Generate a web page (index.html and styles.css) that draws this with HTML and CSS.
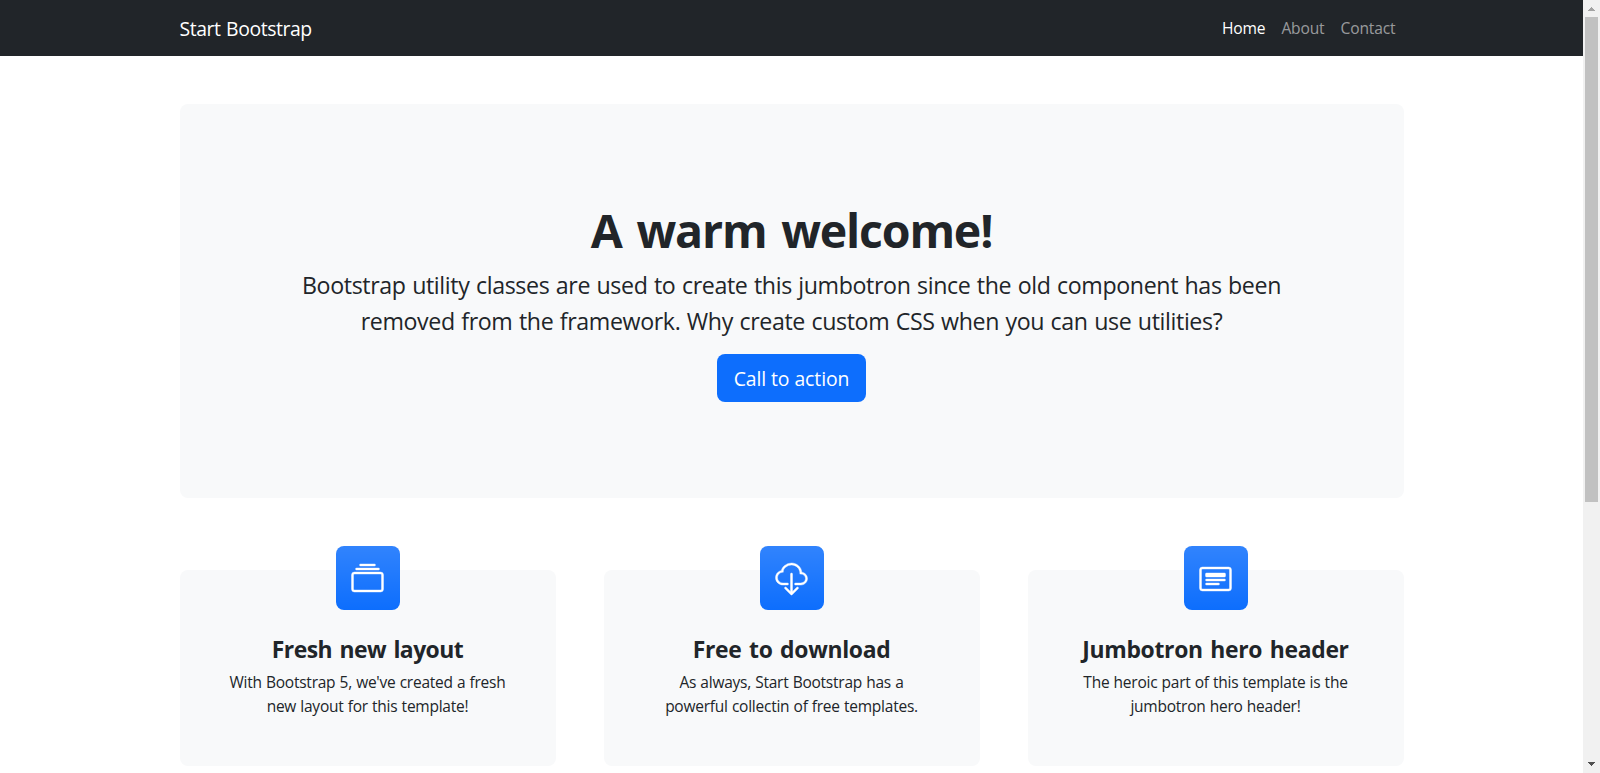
FILE: index.html
```html
<!DOCTYPE html>
<html lang="en">
<head>
<meta charset="utf-8">
<title>Start Bootstrap</title>
<link rel="stylesheet" href="styles.css">
</head>
<body>
<div class="window">
  <div class="page">
    <nav class="navbar">
      <div class="container navbar-inner">
        <a class="brand">Start Bootstrap</a>
        <ul class="nav">
          <li class="nav-link active">Home</li>
          <li class="nav-link">About</li>
          <li class="nav-link">Contact</li>
        </ul>
      </div>
    </nav>
    <header class="container hero">
      <h1 class="hero-title">A warm welcome!</h1>
      <p class="hero-lead">Bootstrap utility classes are used to create this jumbotron since the old component has been<br>removed from the framework. Why create custom CSS when you can use utilities?</p>
      <a class="btn">Call to action</a>
    </header>
    <section class="container cards">
      <article class="card">
        <div class="feature">
          <svg class="icon" viewBox="0 0 16 16"><path d="M2.5 3.5a.5.5 0 0 1 0-1h11a.5.5 0 0 1 0 1h-11zm2-2a.5.5 0 0 1 0-1h7a.5.5 0 0 1 0 1h-7zM0 13a1.5 1.5 0 0 0 1.5 1.5h13A1.5 1.5 0 0 0 16 13V6a1.5 1.5 0 0 0-1.5-1.5h-13A1.5 1.5 0 0 0 0 6v7zm1.5.5A.5.5 0 0 1 1 13V6a.5.5 0 0 1 .5-.5h13a.5.5 0 0 1 .5.5v7a.5.5 0 0 1-.5.5h-13z"/></svg>
        </div>
        <h2 class="card-title tight">Fresh new layout</h2>
        <p class="card-text">With Bootstrap 5, we've created a fresh<br>new layout for this template!</p>
      </article>
      <article class="card">
        <div class="feature">
          <svg class="icon" viewBox="0 0 16 16"><path d="M4.406 1.342A5.53 5.53 0 0 1 8 0c2.69 0 4.923 2 5.166 4.579C14.758 4.804 16 6.137 16 7.773 16 9.569 14.502 11 12.687 11H10a.5.5 0 0 1 0-1h2.688C13.979 10 15 8.988 15 7.773c0-1.216-1.02-2.228-2.313-2.228h-.5v-.5C12.188 2.825 10.328 1 8 1a4.53 4.53 0 0 0-2.941 1.1c-.757.652-1.153 1.438-1.153 2.055v.448l-.445.049C2.064 4.805 1 5.952 1 7.318 1 8.785 2.23 10 3.781 10H6a.5.5 0 0 1 0 1H3.781C1.708 11 0 9.366 0 7.318c0-1.763 1.266-3.223 2.942-3.593.143-.863.698-1.723 1.464-2.383z"/><path d="M7.646 15.854a.5.5 0 0 0 .708 0l3-3a.5.5 0 0 0-.708-.708L8.5 14.293V5.5a.5.5 0 0 0-1 0v8.793l-2.146-2.147a.5.5 0 0 0-.708.708l3 3z"/></svg>
        </div>
        <h2 class="card-title">Free to download</h2>
        <p class="card-text">As always, Start Bootstrap has a<br>powerful collectin of free templates.</p>
      </article>
      <article class="card">
        <div class="feature">
          <svg class="icon" viewBox="0 0 16 16"><path d="M14.5 3a.5.5 0 0 1 .5.5v9a.5.5 0 0 1-.5.5h-13a.5.5 0 0 1-.5-.5v-9a.5.5 0 0 1 .5-.5h13zm-13-1A1.5 1.5 0 0 0 0 3.5v9A1.5 1.5 0 0 0 1.5 14h13a1.5 1.5 0 0 0 1.5-1.5v-9A1.5 1.5 0 0 0 14.5 2h-13z"/><path d="M3 8.5a.5.5 0 0 1 .5-.5h9a.5.5 0 0 1 0 1h-9a.5.5 0 0 1-.5-.5zm0 2a.5.5 0 0 1 .5-.5h6a.5.5 0 0 1 0 1h-6a.5.5 0 0 1-.5-.5zm0-5a.5.5 0 0 1 .5-.5h9a.5.5 0 0 1 .5.5v1a.5.5 0 0 1-.5.5h-9a.5.5 0 0 1-.5-.5v-1z"/></svg>
        </div>
        <h2 class="card-title">Jumbotron hero header</h2>
        <p class="card-text">The heroic part of this template is the<br>jumbotron hero header!</p>
      </article>
    </section>
  </div>
  <div class="scrollbar">
    <svg class="arrow" viewBox="0 0 17 17" shape-rendering="crispEdges"><path fill="#a3a3a3" d="M8 7h1v1h1v1h1v1h1v1H5v-1h1V9h1V8h1z"/></svg>
    <div class="thumb"></div>
    <svg class="arrow arrow-down" viewBox="0 0 17 17" shape-rendering="crispEdges"><path fill="#505050" d="M5 6h7v1h-1v1h-1v1H9v1H8V9H7V8H6V7H5z"/></svg>
  </div>
</div>
</body>
</html>
```

FILE: styles.css
```css
* { box-sizing: border-box; }
body {
  margin: 0;
  background: #fff;
  color: #212529;
  font-family: "Segoe UI", "Open Sans", "Noto Sans", sans-serif;
  font-size: 16px;
  line-height: 1.5;
  overflow: hidden;
}
h1, h2, p, ul { margin: 0; padding: 0; }
.window { display: flex; height: 773px; overflow: hidden; }
.page { flex: 1; }
.container { width: 1224px; margin: 0 auto; }

.navbar { background: #212529; height: 56px; }
.navbar-inner { display: flex; align-items: center; justify-content: space-between; height: 56px; }
.brand { color: #fff; font-size: 19.4px; letter-spacing: -.43px; word-spacing: 1px; line-height: 30px; padding-top: 1px; }
.nav { display: flex; list-style: none; }
.nav-link { padding: 8px; font-size: 15.6px; line-height: 24px; letter-spacing: -.15px; color: rgba(255, 255, 255, .55); }
.nav-link.active { color: #fff; }

.hero {
  display: flex;
  flex-direction: column;
  align-items: center;
  margin-top: 48px;
  height: 394px;
  padding-top: 97px;
  border-radius: 8px;
  background: #f8f9fa;
  text-align: center;
}
.hero-title { font-size: 46.5px; font-weight: 700; line-height: 58px; letter-spacing: -1.2px; word-spacing: 4px; margin-bottom: 8px; }
.hero-lead { font-size: 23.2px; line-height: 36px; letter-spacing: -.37px; word-spacing: .8px; margin-bottom: 15px; white-space: nowrap; }
.btn {
  width: 149px;
  height: 48px;
  border-radius: 8px;
  background: #0d6efd;
  color: #fff;
  font-size: 19.4px;
  line-height: 49px;
  letter-spacing: -.08px;
}

.cards { display: grid; grid-template-columns: repeat(3, 376px); gap: 48px; margin-top: 72px; }
.card {
  display: flex;
  flex-direction: column;
  align-items: center;
  height: 196px;
  border-radius: 8px;
  background: #f8f9fa;
  text-align: center;
}
.feature {
  display: flex;
  align-items: center;
  justify-content: center;
  width: 64px;
  height: 64px;
  margin: -24px 0 24px;
  padding-top: 2px;
  border-radius: 8px;
  background: #0d6efd linear-gradient(180deg, rgba(255, 255, 255, .15), rgba(255, 255, 255, 0));
}
.icon { width: 33px; height: 32px; fill: #fff; stroke: #fff; stroke-width: .2; overflow: visible; }
.card-title { font-size: 22.9px; font-weight: 700; line-height: 29px; letter-spacing: -.32px; word-spacing: 2px; margin: 1px 0 6px; }
.card-title.tight { letter-spacing: -.54px; }
.card-text { font-size: 15.5px; line-height: 24px; letter-spacing: -.24px; word-spacing: .4px; white-space: nowrap; }

.scrollbar { display: flex; flex-direction: column; align-items: center; width: 17px; background: #f1f1f1; }
.arrow { width: 17px; height: 17px; }
.arrow-down { margin-top: auto; }
.thumb { width: 13px; height: 485px; background: #c1c1c1; }
```
